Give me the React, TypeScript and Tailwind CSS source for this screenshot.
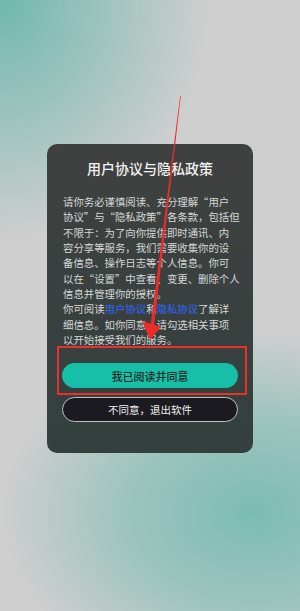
const lines: { text: string; links?: boolean }[] = [
  { text: "请你务必谨慎阅读、充分理解“用户" },
  { text: "协议”与“隐私政策”各条款，包括但" },
  { text: "不限于：为了向你提供即时通讯、内" },
  { text: "容分享等服务，我们需要收集你的设" },
  { text: "备信息、操作日志等个人信息。你可" },
  { text: "以在“设置”中查看、变更、删除个人" },
  { text: "信息并管理你的授权。" },
  { text: "", links: true },
  { text: "细信息。如你同意，请勾选相关事项" },
  { text: "以开始接受我们的服务。" },
];

const App = () => {
  return (
    <div
      className="relative w-full h-[611px] overflow-hidden bg-[#cfcfcf] bg-[radial-gradient(ellipse_70%_40%_at_0%_0%,#6fb8ad_0%,rgba(111,184,173,0.55)_45%,rgba(111,184,173,0)_100%),radial-gradient(ellipse_85%_30%_at_85%_84%,#7bbcb2_0%,rgba(123,188,178,0.6)_50%,rgba(123,188,178,0)_100%)]"
      style={{ fontFamily: '"Noto Sans CJK SC", "Noto Sans", sans-serif' }}
    >
      <div className="pt-[144px] flex justify-center">
        <div className="w-[206px] h-[309px] rounded-[10px] bg-gradient-to-b from-[#3f4140] to-[#33403e] px-[16px] pt-[14px] flex flex-col">
          <h1 className="text-center text-[14px] leading-[20px] font-medium text-[#f2f2f2]">
            用户协议与隐私政策
          </h1>
          <div className="mt-[16px] text-[10.4px] leading-[15.33px] text-[#d6d8d7] whitespace-nowrap">
            {lines.map((l, i) =>
              l.links ? (
                <div key={i}>
                  你可阅读<span className="text-[#2f5fe0] font-medium">用户协议</span>和
                  <span className="text-[#2f5fe0] font-medium">隐私协议</span>了解详
                </div>
              ) : (
                <div key={i}>{l.text}</div>
              )
            )}
          </div>
          <div className="mt-[16px] flex flex-col gap-[9px] -mx-[1px]">
            <button className="h-[25px] w-full rounded-full bg-[#17bfa8] text-[11px] font-medium text-[#1c2a27]">
              我已阅读并同意
            </button>
            <button className="h-[25px] w-full rounded-full bg-[#1b1a20] border border-[#bfc0c0] text-[10.5px] text-[#f0f0f0]">
              不同意，退出软件
            </button>
          </div>
        </div>
      </div>

      {/* annotation overlay */}
      <div className="absolute left-[57px] top-[346px] w-[190px] h-[49px] border-2 border-[#ec2f2f]" />
      <svg className="absolute inset-0 pointer-events-none" width="300" height="611" viewBox="0 0 300 611">
        <polygon points="180.2,96 180.8,96 154,326 150.5,326" fill="#ee2b2b" />
        <polygon points="142,321 161,327 150,340" fill="#ee2b2b" />
      </svg>
    </div>
  );
};

export default App;
